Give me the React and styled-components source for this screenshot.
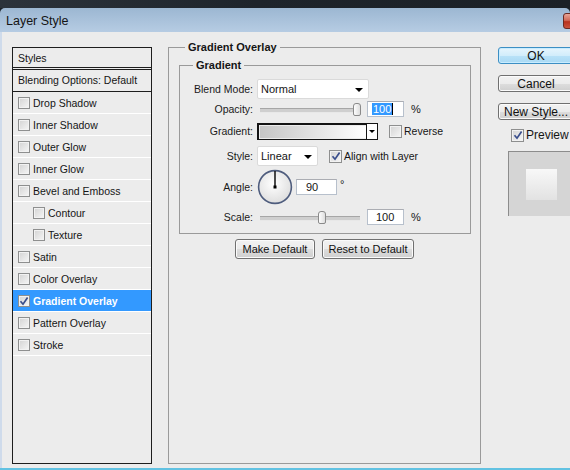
import styled, { createGlobalStyle } from 'styled-components';

const GlobalStyle = createGlobalStyle`
  html, body {
    margin: 0;
    padding: 0;
  }
  body {
    width: 570px;
    height: 470px;
    overflow: hidden;
    background: #ececec;
    font-family: "Liberation Sans", Arial, sans-serif;
    color: #151515;
  }
  * {
    box-sizing: border-box;
  }
`;

const Window = styled.div`
  display: flex;
  flex-direction: column;
  width: 570px;
  height: 470px;
  overflow: hidden;
  background: #1d232a;
`;

const TopStrip = styled.div`
  height: 8px;
  background: linear-gradient(90deg, #2c333b, #1e242b 45%, #1b2026);
`;

const TitleBar = styled.div`
  display: flex;
  align-items: center;
  justify-content: space-between;
  height: 24px;
  padding: 2px 0 0 6px;
  border-radius: 5px 5px 0 0;
  background: linear-gradient(#9cb7d2, #b6cce3);
  font-size: 12.5px;
  color: #141414;
  overflow: hidden;
`;

const CloseButton = styled.div`
  width: 30px;
  height: 16px;
  margin-right: -23px;
  border: 1px solid #6a2a22;
  border-radius: 3px;
  background: linear-gradient(#e9a597, #d06a58 45%, #b8321e 55%, #c8523c);
`;

const Client = styled.div`
  flex: 1;
  display: flex;
  align-items: flex-start;
  padding: 8px 0 0 10px;
  border-left: 2px solid #cfdbeb;
  background: #ececec;
  overflow: hidden;
`;

const BottomEdge = styled.div`
  height: 2px;
  background: #62c2e2;
`;

/* ---------- left styles list ---------- */

const StylesPanel = styled.div`
  flex: none;
  width: 140px;
  height: 417px;
  margin-top: 7px;
  border: 1px solid #1e1e1e;
  font-size: 10.5px;
`;

const PanelHeader = styled.div`
  height: 22px;
  padding-left: 5px;
  line-height: 20px;
  border-bottom: 3px double #1e1e1e;
`;

const BlendRow = styled.div`
  height: 22px;
  padding-left: 5px;
  line-height: 21px;
  border-bottom: 1px solid #1e1e1e;
`;

const StyleRow = styled.div`
  display: flex;
  align-items: center;
  gap: 3px;
  height: 22px;
  padding-left: ${(p) => (p.$sub ? 20 : 5)}px;
  border-bottom: 1px solid #ffffff;
  background: ${(p) => (p.$active ? '#3399ff' : 'transparent')};
  color: ${(p) => (p.$active ? '#ffffff' : '#151515')};
  font-weight: ${(p) => (p.$active ? 'bold' : 'normal')};
`;

/* ---------- checkbox ---------- */

const Box = styled.span`
  display: inline-flex;
  align-items: center;
  justify-content: center;
  flex: none;
  width: ${(p) => p.$size || 12}px;
  height: ${(p) => p.$size || 12}px;
  border: 1px solid #8e8f8f;
  background: linear-gradient(135deg, #d3d3d3, #f6f6f6);
  box-shadow: inset 0 0 0 1px #f2f2f2;
`;

function Check({ checked, size }) {
  return (
    <Box $size={size}>
      {checked && (
        <svg width="10" height="10" viewBox="0 0 10 10">
          <path d="M1.5 5.2 L4 8.2 L8.6 1.4" fill="none" stroke="#3a4e8c" strokeWidth="1.7" />
        </svg>
      )}
    </Box>
  );
}

/* ---------- middle group ---------- */

const Group = styled.fieldset`
  flex: none;
  width: 313px;
  height: 423px;
  margin: 1px 17px 0 16px;
  padding: 0;
  border: 1px solid #9a9a9a;
`;

const InnerGroup = styled.fieldset`
  margin: 0;
  padding: 0;
  border: 1px solid #9a9a9a;
`;

const Legend = styled.legend`
  margin-left: ${(p) => p.$indent}px;
  padding: 0 3px;
  line-height: 13px;
  font-size: 11px;
  font-weight: bold;
  color: #151515;
`;

const GroupBody = styled.div`
  padding: 5px 9px 0 10px;
`;

const FormGrid = styled.div`
  display: grid;
  grid-template-columns: 73px 1fr;
  grid-template-rows: 22px 18px 26px 24px 38px 22px;
  column-gap: 4px;
  align-items: center;
  padding: 6px 0 5px;
  font-size: 10.5px;
`;

const Label = styled.div`
  text-align: right;
  color: #1a1a1a;
`;

const Controls = styled.div`
  display: flex;
  align-items: center;
  gap: ${(p) => p.$gap || 7}px;
`;

const Select = styled.div`
  position: relative;
  display: flex;
  align-items: center;
  width: ${(p) => p.$w}px;
  height: 20px;
  padding-left: 3px;
  border: 1px solid #dadada;
  border-radius: 2px;
  background: #ffffff;
  font-size: 11px;
  &::after {
    content: '';
    position: absolute;
    right: 5px;
    top: 8px;
    border-left: 4px solid transparent;
    border-right: 4px solid transparent;
    border-top: 4px solid #000;
  }
`;

const Slider = styled.div`
  position: relative;
  width: 100px;
  height: 14px;
  margin-left: 3px;
  &::before {
    content: '';
    position: absolute;
    left: 0;
    right: 0;
    top: 6px;
    height: 3px;
    border-top: 1px solid #a6a6a6;
    border-bottom: 1px solid #e8e8e8;
    background: #cfcfcf;
  }
`;

const Thumb = styled.div`
  position: absolute;
  top: 1px;
  width: 8px;
  height: 13px;
  margin-left: -4px;
  border: 1px solid #8a8a8a;
  border-radius: 3px 3px 2px 2px;
  background: linear-gradient(90deg, #fdfdfd, #dedede);
`;

const NumField = styled.div`
  display: flex;
  align-items: center;
  width: ${(p) => p.$w || 37}px;
  height: 16px;
  padding-left: ${(p) => p.$pad || 5}px;
  border: 1px solid #b7c0cc;
  border-top-color: #abadb3;
  background: #ffffff;
  font-size: 11px;
`;

const Selected = styled.span`
  background: #3399ff;
  color: #ffffff;
  padding: 0 1px;
  border-right: 1px solid #000;
`;

const Unit = styled.span`
  font-size: 11px;
`;

const Degree = styled.span`
  align-self: flex-start;
  margin-top: 9px;
  font-size: 11px;
`;

const GradientPicker = styled.div`
  display: flex;
  width: 121px;
  height: 17px;
  border: 1px solid #141414;
  box-shadow: inset 1px 1px 0 #141414;
`;

const Swatch = styled.div`
  flex: 1;
  margin: 2px 0 1px 2px;
  background: linear-gradient(90deg, #c6c6c6, #ffffff);
`;

const DropButton = styled.div`
  position: relative;
  width: 11px;
  border-left: 1px solid #141414;
  background: #ffffff;
  &::after {
    content: '';
    position: absolute;
    left: 2px;
    top: 6px;
    border-left: 3px solid transparent;
    border-right: 3px solid transparent;
    border-top: 3px solid #000;
  }
`;

const CheckLabel = styled.label`
  display: flex;
  align-items: center;
  gap: 2px;
  font-size: ${(p) => p.$size || 10.5}px;
  white-space: nowrap;
`;

const ButtonRow = styled.div`
  display: flex;
  justify-content: center;
  gap: 7px;
  margin-top: 5px;
  padding-right: 1px;
`;

const PushButton = styled.button`
  flex: none;
  width: ${(p) => p.$w}px;
  height: ${(p) => p.$h || 20}px;
  padding: 0;
  border: 1px solid ${(p) => (p.$primary ? '#3c8fc4' : '#707070')};
  border-radius: 3px;
  background: ${(p) =>
    p.$primary
      ? 'linear-gradient(#e6f5fd, #d2edfb 50%, #b9e2f8 51%, #a9d9f4)'
      : 'linear-gradient(#f2f2f2, #ebebeb 50%, #dddddd 51%, #cfcfcf)'};
  box-shadow: inset 0 0 0 1px ${(p) => (p.$primary ? '#c8ecff' : '#fbfbfb')};
  font-family: "Liberation Sans", Arial, sans-serif;
  font-size: ${(p) => p.$fs || 11}px;
  color: #111;
  white-space: nowrap;
  overflow: hidden;
  line-height: 1;
`;

/* ---------- right column ---------- */

const SideColumn = styled.div`
  flex: none;
  display: flex;
  flex-direction: column;
  gap: 11px;
  width: 80px;
  margin-top: 7px;
`;

const PreviewRow = styled.div`
  margin-top: -3px;
  padding-left: 13px;
`;

const PreviewBox = styled.div`
  display: flex;
  width: 70px;
  height: 65px;
  margin: -2px 0 0 10px;
  padding: 17px 0 0 17px;
  border-top: 1px solid #8c8c8c;
  border-left: 1px solid #8c8c8c;
  background: #d5d5d5;
`;

const PreviewSquare = styled.div`
  width: 31px;
  height: 31px;
  background: linear-gradient(#f8f8f8, #e2e2e2);
`;

function Dial() {
  return (
    <svg width="36" height="36" viewBox="0 0 36 36">
      <defs>
        <radialGradient id="dialFill" cx="45%" cy="40%" r="60%">
          <stop offset="0%" stopColor="#ffffff" />
          <stop offset="100%" stopColor="#dedede" />
        </radialGradient>
      </defs>
      <circle cx="18" cy="18" r="16.4" fill="url(#dialFill)" stroke="#4e5c7d" strokeWidth="1.6" />
      <line x1="18" y1="18" x2="18" y2="2" stroke="#000" strokeWidth="1.4" />
      <rect x="16.5" y="16.5" width="3" height="3" fill="#000" />
    </svg>
  );
}

const styleItems = [
  { name: 'Drop Shadow' },
  { name: 'Inner Shadow' },
  { name: 'Outer Glow' },
  { name: 'Inner Glow' },
  { name: 'Bevel and Emboss' },
  { name: 'Contour', sub: true },
  { name: 'Texture', sub: true },
  { name: 'Satin' },
  { name: 'Color Overlay' },
  { name: 'Gradient Overlay', active: true },
  { name: 'Pattern Overlay' },
  { name: 'Stroke' },
];

export default function App() {
  return (
    <>
      <GlobalStyle />
      <Window>
        <TopStrip />
        <TitleBar>
          <span>Layer Style</span>
          <CloseButton />
        </TitleBar>
        <Client>
          <StylesPanel>
            <PanelHeader>Styles</PanelHeader>
            <BlendRow>Blending Options: Default</BlendRow>
            {styleItems.map((item) => (
              <StyleRow key={item.name} $sub={item.sub} $active={item.active}>
                <Check checked={item.active} />
                <span>{item.name}</span>
              </StyleRow>
            ))}
          </StylesPanel>

          <Group>
            <Legend $indent={16}>Gradient Overlay</Legend>
            <GroupBody>
              <InnerGroup>
                <Legend $indent={13}>Gradient</Legend>
                <FormGrid>
                  <Label>Blend Mode:</Label>
                  <Controls>
                    <Select $w={112}>Normal</Select>
                  </Controls>

                  <Label>Opacity:</Label>
                  <Controls>
                    <Slider>
                      <Thumb style={{ left: '97%' }} />
                    </Slider>
                    <NumField $pad={4}>
                      <Selected>100</Selected>
                    </NumField>
                    <Unit>%</Unit>
                  </Controls>

                  <Label>Gradient:</Label>
                  <Controls $gap={11}>
                    <GradientPicker>
                      <Swatch />
                      <DropButton />
                    </GradientPicker>
                    <CheckLabel>
                      <Check size={13} />
                      Reverse
                    </CheckLabel>
                  </Controls>

                  <Label>Style:</Label>
                  <Controls $gap={11}>
                    <Select $w={61}>Linear</Select>
                    <CheckLabel>
                      <Check checked size={13} />
                      Align with Layer
                    </CheckLabel>
                  </Controls>

                  <Label>Angle:</Label>
                  <Controls $gap={3}>
                    <Dial />
                    <NumField $w={41} $pad={9}>90</NumField>
                    <Degree>°</Degree>
                  </Controls>

                  <Label>Scale:</Label>
                  <Controls>
                    <Slider>
                      <Thumb style={{ left: '62%' }} />
                    </Slider>
                    <NumField $pad={8}>100</NumField>
                    <Unit>%</Unit>
                  </Controls>
                </FormGrid>
              </InnerGroup>
              <ButtonRow>
                <PushButton $w={80}>Make Default</PushButton>
                <PushButton $w={92}>Reset to Default</PushButton>
              </ButtonRow>
            </GroupBody>
          </Group>

          <SideColumn>
            <PushButton $primary $w={76} $h={17} $fs={12}>OK</PushButton>
            <PushButton $w={76} $h={17} $fs={12}>Cancel</PushButton>
            <PushButton $w={76} $h={17} $fs={12}>New Style...</PushButton>
            <PreviewRow>
              <CheckLabel $size={12}>
                <Check checked size={13} />
                Preview
              </CheckLabel>
            </PreviewRow>
            <PreviewBox>
              <PreviewSquare />
            </PreviewBox>
          </SideColumn>
        </Client>
        <BottomEdge />
      </Window>
    </>
  );
}
